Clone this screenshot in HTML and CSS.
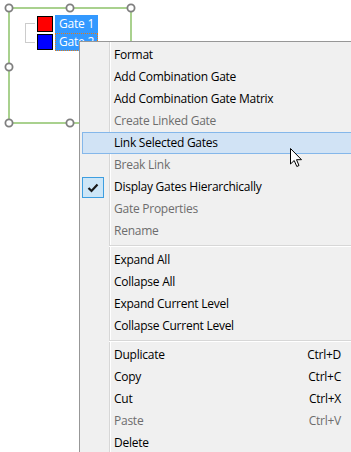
FILE: index.html
```html
<!DOCTYPE html>
<html>
<head>
<meta charset="utf-8">
<link rel="stylesheet" href="styles.css">
</head>
<body>
<div class="canvas">
  <svg class="frame" width="351" height="452" viewBox="0 0 351 452">
    <rect x="9" y="8" width="122" height="115" fill="none" stroke="#a9d18e" stroke-width="2"/>
    <path d="M34.5 23.5 H25.5 V42.5 H34.5" fill="none" stroke="#999" stroke-width="1" stroke-dasharray="1 1"/>
    <g fill="#fff" stroke="#7f7f7f" stroke-width="1.8">
      <circle cx="9" cy="8" r="3.6"/>
      <circle cx="70" cy="8" r="3.6"/>
      <circle cx="131" cy="8" r="3.6"/>
      <circle cx="9" cy="67" r="3.6"/>
      <circle cx="9" cy="123" r="3.6"/>
      <circle cx="70" cy="123" r="3.6"/>
    </g>
  </svg>
  <div class="gates">
    <div class="gate"><span class="swatch red"></span><span class="label">Gate 1</span></div>
    <div class="gate"><span class="swatch blue"></span><span class="label focus">Gate 2</span></div>
  </div>
  <div class="menu">
    <div class="item">Format</div>
    <div class="item">Add Combination Gate</div>
    <div class="item">Add Combination Gate Matrix</div>
    <div class="item disabled">Create Linked Gate</div>
    <div class="item hover">Link Selected Gates</div>
    <div class="item disabled">Break Link</div>
    <div class="item checked"><span class="check"><svg width="12" height="10" viewBox="0 0 12 10"><path d="M1.5 5 L4.5 8 L10.5 1.5" fill="none" stroke="#1a1a1a" stroke-width="2.2"/></svg></span>Display Gates Hierarchically</div>
    <div class="item disabled">Gate Properties</div>
    <div class="item disabled">Rename</div>
    <div class="sep"></div>
    <div class="item">Expand All</div>
    <div class="item">Collapse All</div>
    <div class="item">Expand Current Level</div>
    <div class="item">Collapse Current Level</div>
    <div class="sep"></div>
    <div class="item"><span>Duplicate</span><span class="key">Ctrl+D</span></div>
    <div class="item"><span>Copy</span><span class="key">Ctrl+C</span></div>
    <div class="item"><span>Cut</span><span class="key">Ctrl+X</span></div>
    <div class="item disabled"><span>Paste</span><span class="key">Ctrl+V</span></div>
    <div class="item"><span>Delete</span></div>
  </div>
  <svg class="cursor" width="13" height="20" viewBox="0 0 13 20">
    <path d="M0.5 0.5 V16 L4.2 12.5 L6.8 18.5 L9 17.5 L6.5 11.7 L11.5 11.7 Z" fill="#fff" stroke="#000" stroke-width="1" stroke-linejoin="miter"/>
  </svg>
</div>
</body>
</html>
```

FILE: styles.css
```css
html, body {
  margin: 0;
  padding: 0;
  background: #ffffff;
  width: 351px;
  height: 452px;
  overflow: hidden;
  font-family: "Open Sans", "Noto Sans", sans-serif;
}

.canvas {
  position: relative;
  width: 351px;
  height: 452px;
  overflow: hidden;
}

.frame {
  position: absolute;
  left: 0;
  top: 0;
}

.gates {
  position: absolute;
  left: 37px;
  top: 15px;
  display: flex;
  flex-direction: column;
}

.gate {
  display: flex;
  align-items: center;
  height: 18px;
  gap: 2px;
}

.swatch {
  box-sizing: border-box;
  width: 16px;
  height: 16px;
  border: 1px solid #000;
}

.swatch.red { background: #ff0000; }
.swatch.blue { background: #0000ff; }

.label {
  box-sizing: border-box;
  height: 18px;
  line-height: 18px;
  padding: 0 4px;
  background: #3399ff;
  color: #fff;
  font-size: 12px;
  letter-spacing: -0.2px;
}

.label.focus {
  outline: 1px dotted #e07b1a;
  outline-offset: -1px;
}

.menu {
  position: absolute;
  left: 79px;
  top: 41px;
  width: 300px;
  box-sizing: border-box;
  border: 1px solid #979797;
  padding: 2px;
  background-color: #f0f0f0;
  background-image: linear-gradient(to right, transparent 29px, #d7d7d7 29px, #d7d7d7 30px, #ffffff 30px, #ffffff 31px, transparent 31px);
  font-size: 12px;
  letter-spacing: -0.25px;
  color: #000;
}

.item {
  position: relative;
  box-sizing: border-box;
  height: 22px;
  line-height: 22px;
  padding-left: 32px;
  padding-right: 35px;
  display: flex;
  justify-content: space-between;
  white-space: nowrap;
}

.item.disabled {
  color: #6d6d6d;
}

.item.hover {
  background: #d1e3f5;
  border: 1px solid #84b7ea;
  line-height: 20px;
  padding-left: 31px;
}

.check {
  position: absolute;
  left: 0;
  top: 1px;
  box-sizing: border-box;
  width: 22px;
  height: 21px;
  background: #cde6f7;
  border: 1px solid #3d9ee0;
  display: flex;
  align-items: center;
  justify-content: center;
}

.sep {
  height: 0;
  margin: 3px 0 2px 27px;
  border-top: 1px solid #d7d7d7;
  border-bottom: 1px solid #ffffff;
}

.cursor {
  position: absolute;
  left: 290px;
  top: 148px;
}
```
